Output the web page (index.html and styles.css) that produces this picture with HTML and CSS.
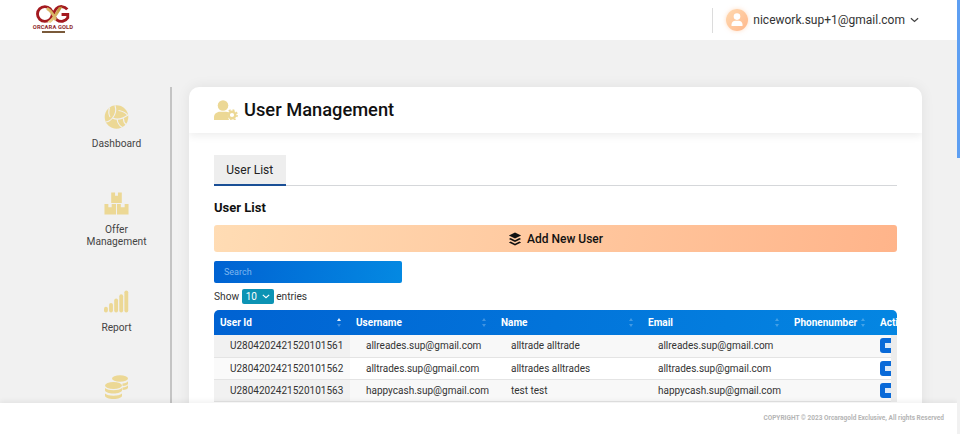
FILE: index.html
```html
<!DOCTYPE html>
<html lang="en">
<head>
<meta charset="utf-8">
<title>User Management</title>
<link rel="stylesheet" href="styles.css">
</head>
<body>
<div class="viewport">
  <div class="page">
    <header class="topbar">
      <a class="logo" href="#">
        <svg class="logo-mark" viewBox="0 0 42 20" aria-hidden="true">
          <defs>
            <linearGradient id="goldx" x1="0" y1="1" x2="1" y2="0">
              <stop offset="0" stop-color="#f3dc9a"/>
              <stop offset="1" stop-color="#b98a2c"/>
            </linearGradient>
          </defs>
          <circle cx="12.500" cy="10" r="7.800" fill="none" stroke="#a3191f" stroke-width="3"/>
          <path d="M36 5.200A7.800 7.800 0 1 0 36.500 14V10.500H30" fill="none" stroke="#a3191f" stroke-width="3"/>
          <path d="M15 18C19 16 23 10 27 3L31 2C27 9 23 16 18 19.500ZM15 3C19 4 22 9 25 15L23 17.500C21 12 18 8 14 5.500Z" fill="url(#goldx)"/>
        </svg>
        <span class="logo-text">ORCARA GOLD</span>
        <span class="logo-bar"></span>
      </a>
      <div class="account">
        <span class="avatar">
          <svg viewBox="0 0 22 22" aria-hidden="true">
            <circle cx="11" cy="7.600" r="3.300" fill="#fff"/>
            <path d="M5.500 17v-1.400c0-2.400 1.800-3.800 3.800-3.800h3.400c2 0 3.800 1.400 3.800 3.800V17Z" fill="#fff"/>
          </svg>
        </span>
        <span class="account-email">nicework.sup+1@gmail.com</span>
        <svg class="chevron" viewBox="0 0 10 6" aria-hidden="true"><path d="M1 1l4 3.600L9 1" fill="none" stroke="#444" stroke-width="1.400"/></svg>
      </div>
    </header>

    <div class="layout">
      <nav class="sidebar">
        <a class="nav-item" href="#">
          <svg class="nav-icon" viewBox="0 0 24 24" aria-hidden="true">
            <circle cx="12" cy="12" r="11.800" fill="#ecd895"/>
            <path d="M10.500 .5C12 5 11 9.500 8 13C5.500 16 3 17 1 17M8 13C12 15 18 14 23.500 10M12.500 14C13 17.500 15 21 18 22.500M14 5.500C17.500 6 21 7.500 23 10M5 2.500C4 6 4.200 9.500 5.500 12M19 13.500C19 16.500 20 18.500 21.500 19.500" fill="none" stroke="#f1f1f1" stroke-width="1.100"/>
          </svg>
          <span>Dashboard</span>
        </a>
        <a class="nav-item" href="#">
          <svg class="nav-icon" viewBox="0 0 26 24" aria-hidden="true">
            <path fill-rule="evenodd" fill="#ecd895" d="M7.500 1h11v11h-11ZM11.500 1v3.500h3V1ZM0.500 13h12v11h-12ZM4.500 13v3.500h3.500V13ZM13.500 13h12v11h-12ZM17.500 13v3.500h4V13Z"/>
          </svg>
          <span>Offer<br>Management</span>
        </a>
        <a class="nav-item" href="#">
          <svg class="nav-icon" viewBox="0 0 26 24" aria-hidden="true">
            <rect x="0" y="18" width="4" height="6" rx="2" fill="#ecd895"/>
            <rect x="5.300" y="14" width="4" height="10" rx="2" fill="#ecd895"/>
            <rect x="10.600" y="9.500" width="4" height="14.500" rx="2" fill="#ecd895"/>
            <rect x="15.900" y="5" width="4" height="19" rx="2" fill="#ecd895"/>
            <rect x="21.200" y="1" width="4" height="23" rx="2" fill="#ecd895"/>
          </svg>
          <span>Report</span>
        </a>
        <a class="nav-item" href="#">
          <svg class="nav-icon" viewBox="0 0 24 24" aria-hidden="true">
            <ellipse cx="15.500" cy="3.500" rx="8" ry="3.300" fill="#ecd895"/>
            <path d="M18 8.500c2.500-.3 5-1.200 5.500-2.300v2.600c0 .9-2 2-5.500 2.300ZM18 12.500c2.500-.3 5-1.200 5.500-2.300v2.600c0 .9-2 2-5.500 2.300Z" fill="#ecd895"/>
            <ellipse cx="9" cy="10.500" rx="8.500" ry="3.500" fill="#ecd895"/>
            <path d="M0.500 13v2.300c0 1.800 3.800 3.200 8.500 3.200s8.500-1.400 8.500-3.200V13c-1.800 1.600-5 2.200-8.500 2.200S2.300 14.600.500 13ZM0.500 18.500v2.300C0.500 22.600 4.300 24 9 24s8.500-1.400 8.500-3.200v-2.300c-1.800 1.600-5 2.200-8.500 2.200S2.300 20.100.500 18.500Z" fill="#ecd895"/>
          </svg>
        </a>
      </nav>

      <main class="card">
        <div class="card-title">
          <svg class="title-icon" viewBox="0 0 24 20" aria-hidden="true">
            <circle cx="9" cy="5.500" r="5.300" fill="#ecd895"/>
            <path d="M0 20v-2.500C0 14 2.800 11.800 6 11.800h6c1 0 1.900.2 2.700.6-1.200 2.300-1.200 5.200.4 7.600Z" fill="#ecd895"/>
            <circle cx="18" cy="15" r="3.300" fill="none" stroke="#ecd895" stroke-width="2.400"/>
            <circle cx="18" cy="15" r="5.100" fill="none" stroke="#ecd895" stroke-width="1.500" stroke-dasharray="2 2"/>
          </svg>
          <h1>User Management</h1>
        </div>
        <div class="card-body">
          <div class="tabs"><a class="tab" href="#">User List</a></div>
          <h2>User List</h2>
          <button class="add-btn" type="button">
            <svg viewBox="0 0 16 16" aria-hidden="true">
              <path d="M8 .5 15 4 8 7.500 1 4Z" fill="#111"/>
              <path d="M3 6.800 1 8l7 3.500L15 8l-2-1.200L8 9.300ZM3 10.800 1 12l7 3.500L15 12l-2-1.200L8 13.300Z" fill="#111"/>
            </svg>
            Add New User
          </button>
          <input class="search" type="text" placeholder="Search">
          <div class="length">
            Show
            <span class="select">10
              <svg viewBox="0 0 10 6" aria-hidden="true"><path d="M1 1l4 3.600L9 1" fill="none" stroke="#fff" stroke-width="1.500"/></svg>
            </span>
            entries
          </div>
          <div class="table-wrap">
            <table class="thead">
              <colgroup><col class="c1"><col class="c2"><col class="c3"><col class="c4"><col class="c5"><col class="c6"></colgroup>
              <tr>
                <th><div class="th-in">User Id<span class="sort asc"></span></div></th>
                <th><div class="th-in">Username<span class="sort"></span></div></th>
                <th><div class="th-in">Name<span class="sort"></span></div></th>
                <th><div class="th-in">Email<span class="sort"></span></div></th>
                <th><div class="th-in">Phonenumber<span class="sort"></span></div></th>
                <th><div class="th-in">Action</div></th>
              </tr>
            </table>
            <table class="tbody">
              <colgroup><col class="c1"><col class="c2"><col class="c3"><col class="c4b"><col class="c6"></colgroup>
              <tr>
                <td class="first">U2804202421520101561</td>
                <td>allreades.sup@gmail.com</td>
                <td>alltrade alltrade</td>
                <td>allreades.sup@gmail.com</td>
                <td class="act"><span class="act-btn"><i></i></span></td>
              </tr>
              <tr>
                <td class="first">U2804202421520101562</td>
                <td>alltrades.sup@gmail.com</td>
                <td>alltrades alltrades</td>
                <td>alltrades.sup@gmail.com</td>
                <td class="act"><span class="act-btn"><i></i></span></td>
              </tr>
              <tr>
                <td class="first">U2804202421520101563</td>
                <td>happycash.sup@gmail.com</td>
                <td>test test</td>
                <td>happycash.sup@gmail.com</td>
                <td class="act"><span class="act-btn"><i></i></span></td>
              </tr>
            </table>
            <div class="inner-scroll"></div>
          </div>
        </div>
      </main>
    </div>

    <footer class="footer">COPYRIGHT © 2023 Orcaragold Exclusive, All rights Reserved</footer>
  </div>
  <div class="scrollbar"><div class="thumb"></div></div>
</div>
</body>
</html>
```
FILE: styles.css
```css
* { box-sizing: border-box; }
html, body { margin: 0; padding: 0; height: 100%; overflow: hidden; }
body { font-family: Roboto, "Liberation Sans", sans-serif; color: #222; background: #f1f1f1; }
a { color: inherit; text-decoration: none; }

.viewport { display: flex; height: 434px; width: 960px; }
.page { position: relative; flex: 1; min-width: 0; height: 434px; overflow: hidden; background: #f1f1f1; }
.scrollbar { width: 3px; background: #f1f1f1; }
.thumb { height: 158px; background: #5e9ff2; }

.topbar { height: 40px; background: #fff; display: flex; align-items: center; justify-content: space-between; padding: 0 38px 0 32px; }
.logo { display: flex; flex-direction: column; align-items: center; width: 42px; height: 40px; padding-top: 4px; }
.logo-mark { width: 40px; height: 20px; display: block; }
.logo-text { font: 700 5.800px/6px Roboto, sans-serif; color: #8e2a2c; white-space: nowrap; letter-spacing: .1px; }
.logo-bar { width: 23px; height: 2px; background: #7a5a3a; margin-top: 1px; }

.account { display: flex; align-items: center; height: 25px; padding-left: 13px; border-left: 1px solid #dcdcdc; }
.avatar { width: 22px; height: 22px; border-radius: 50%; background: linear-gradient(135deg, #ffd9b0, #ffb88c); box-shadow: 0 0 4px rgba(255, 190, 140, .5); }
.avatar svg { display: block; width: 22px; height: 22px; }
.account-email { font-size: 12px; color: #333; margin-left: 5px; }
.chevron { width: 9px; height: 6px; margin-left: 5px; }

.layout { display: flex; align-items: flex-start; padding-top: 47px; }
.sidebar { width: 172px; height: 360px; flex: none; border-right: 2px solid #c4c4c4; padding: 18px 0 0 72.500px; display: flex; flex-direction: column; gap: 41px; }
.nav-item { width: 88px; display: flex; flex-direction: column; align-items: center; text-align: center; font-size: 10.200px; line-height: 12px; color: #444; }
.nav-icon { width: 25px; height: 24px; display: block; margin-bottom: 9px; }

.card { width: 733px; margin-left: 17px; background: #fff; border-radius: 10px 10px 0 0; box-shadow: 0 0 14px rgba(0, 0, 0, .07); height: 360px; overflow: hidden; }
.card-title { height: 46px; display: flex; align-items: center; padding-left: 25px; box-shadow: 0 3px 8px rgba(0, 0, 0, .07); }
.title-icon { width: 24px; height: 20px; display: block; }
.card-title h1 { margin: 0 0 0 6px; font-size: 18.300px; font-weight: 500; color: #111; line-height: 24px; }
.card-body { padding: 22px 25px 0; }

.tabs { border-bottom: 1px solid #d5d7da; height: 31px; }
.tab { display: inline-block; width: 71.500px; height: 31px; background: #eeeeee; border-bottom: 2px solid #1a4f96; text-align: center; font-size: 12px; line-height: 30px; color: #222; }
h2 { margin: 14px 0 0; font-size: 13px; font-weight: 700; line-height: 16px; color: #111; }
.add-btn { display: flex; align-items: center; justify-content: center; gap: 5px; width: 100%; height: 27px; margin-top: 9px; padding: 0; border: 0; border-radius: 3px; background: linear-gradient(100deg, #ffdcb4, #ffb48a); font: 500 12px Roboto, sans-serif; color: #111; }
.add-btn svg { width: 14px; height: 14px; display: block; }
.search { display: block; width: 188px; height: 22px; margin-top: 9px; padding: 0 10px; border: 0; border-radius: 2px; outline: 0; background: linear-gradient(100deg, #0062d2, #0489e2); font: 9px Roboto, sans-serif; color: #fff; }
.search::placeholder { color: #7db6f0; opacity: 1; }
.length { display: flex; align-items: center; gap: 2.500px; height: 15px; margin-top: 6px; font-size: 10.200px; color: #333; }
.select { display: flex; align-items: center; justify-content: space-between; width: 32px; height: 15px; padding: 0 4px; border-radius: 2px; background: #0c93b4; color: #fff; font-size: 10px; }
.select svg { width: 8px; height: 5px; display: block; }

.table-wrap { position: relative; margin-top: 6px; border-radius: 5px 5px 0 0; overflow: hidden; }
table { border-collapse: collapse; table-layout: fixed; width: 683px; }
.c1 { width: 136px; } .c2 { width: 145px; } .c3 { width: 147px; } .c4 { width: 146px; } .c5 { width: 86px; } .c6 { width: 23px; } .c4b { width: 232px; }
.thead { background: linear-gradient(100deg, #0062d2, #0486e2); color: #fff; }
th { padding: 0; height: 25px; font-size: 10px; font-weight: 700; text-align: left; overflow: hidden; }
.th-in { display: flex; align-items: center; justify-content: space-between; padding: 0 8px 0 6px; white-space: nowrap; }
.sort { width: 5px; height: 9px; position: relative; display: block; flex: none; }
.sort::before, .sort::after { content: ""; position: absolute; left: 0; border-left: 2.500px solid transparent; border-right: 2.500px solid transparent; opacity: .25; }
.sort::before { top: 0; border-bottom: 3px solid #fff; }
.sort::after { bottom: 0; border-top: 3px solid #fff; }
.sort.asc::before { opacity: .9; }

td { height: 22px; padding: 0 0 0 16px; font-size: 10px; color: #333; white-space: nowrap; border-bottom: 1px solid #e4e4e4; }
tr:nth-child(odd) td { background: #f8f8f8; }
tr:nth-child(odd) td.first { background: #f1f1f1; }
tr:nth-child(even) td.first { background: #fafafa; }
td.act { padding: 0 0 0 6px; overflow: hidden; }
.act-btn { display: flex; align-items: center; width: 24px; height: 15px; padding-left: 5px; border-radius: 3px; background: #0a6ad8; }
.act-btn i { display: block; width: 6px; height: 5px; background: #dce9f8; }
.inner-scroll { position: absolute; top: 25px; right: 0; bottom: 0; width: 6px; background: #ececec; }

.footer { position: absolute; left: 0; right: 0; bottom: 0; height: 31px; background: #fff; box-shadow: 0 -2px 5px rgba(0, 0, 0, .06); padding-right: 13px; text-align: right; font-size: 6.500px; font-weight: 700; line-height: 30px; color: #b5b5b5; }
```
